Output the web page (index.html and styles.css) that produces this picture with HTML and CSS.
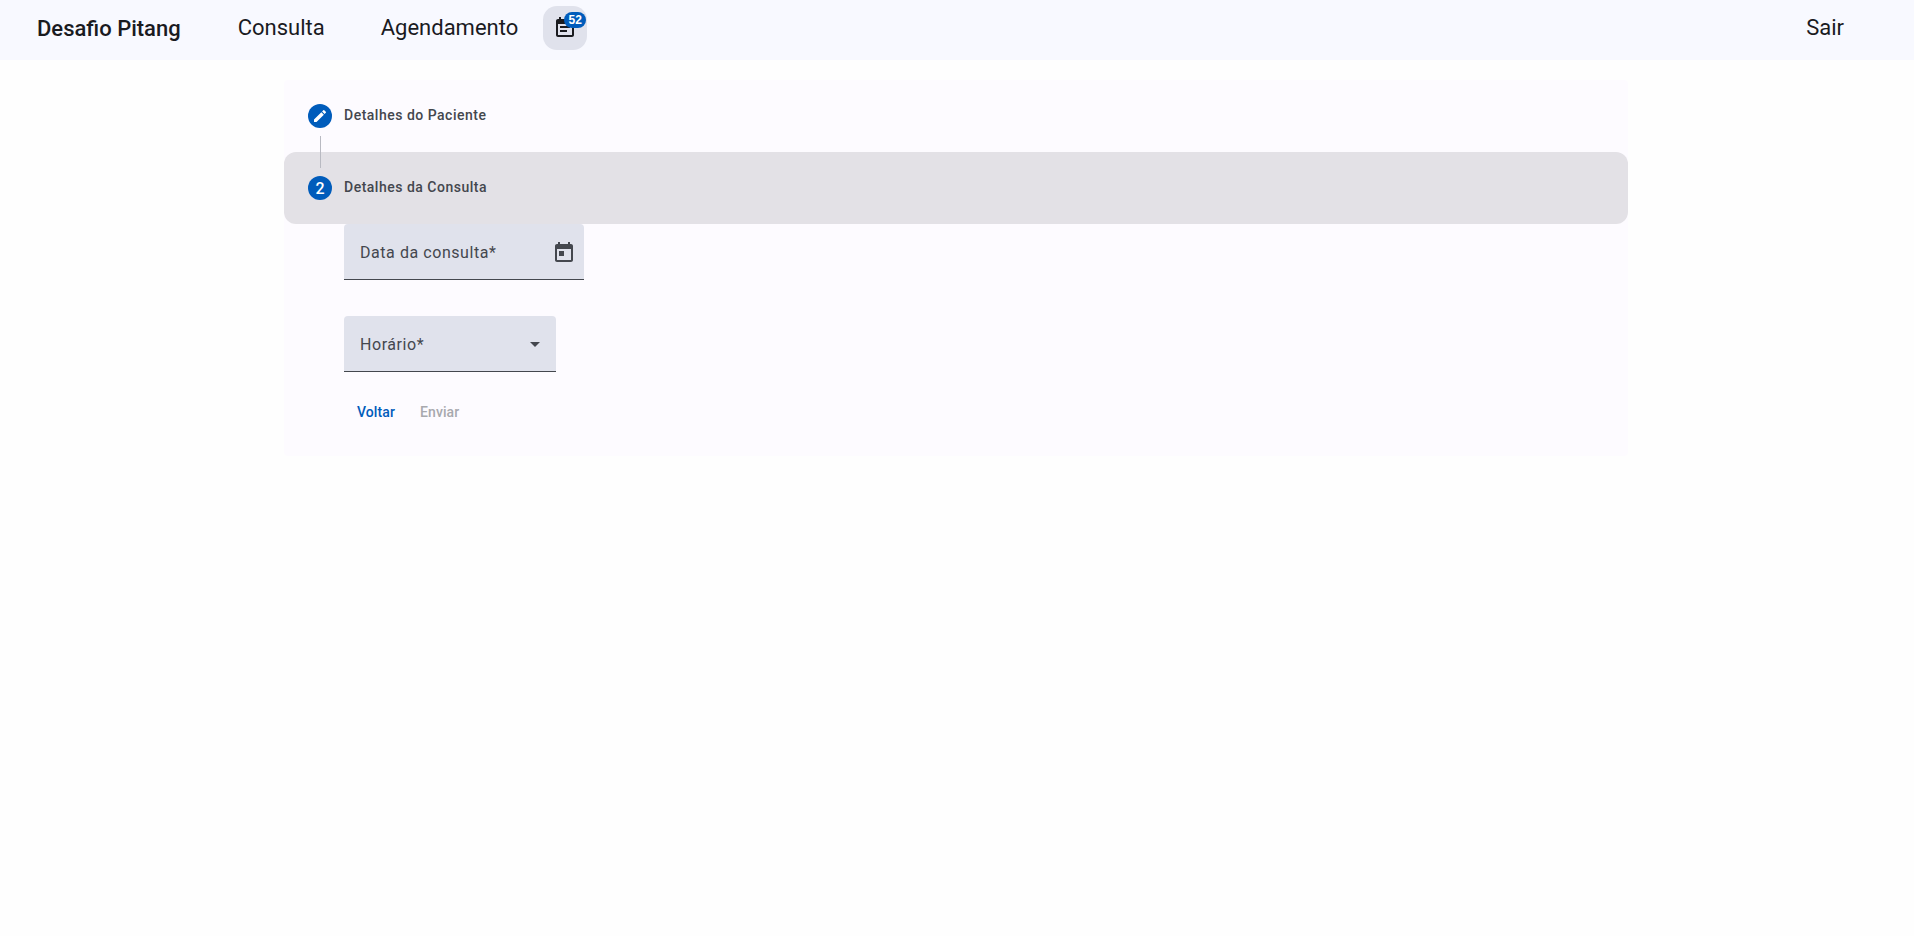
FILE: index.html
```html
<!DOCTYPE html>
<html lang="pt-BR">

<head>
  <meta charset="UTF-8">
  <title>Desafio Pitang</title>
  <link rel="stylesheet" href="styles.css">
</head>

<body>
  <header class="toolbar">
    <span class="brand">Desafio Pitang</span>
    <a class="nav-link">Consulta</a>
    <a class="nav-link">Agendamento</a>
    <button class="icon-btn" type="button">
      <svg class="icon" viewBox="0 0 24 24" width="24" height="24">
        <path d="M19 3h-1V1h-2v2H8V1H6v2H5c-1.100 0-2 .9-2 2v14c0 1.100.9 2 2 2h14c1.100 0 2-.9 2-2V5c0-1.100-.9-2-2-2zm0 16H5V8h14v11zM7 10h10v2H7v-2zm0 4h7v2H7v-2z" />
      </svg>
      <span class="badge">52</span>
    </button>
    <a class="nav-link logout">Sair</a>
  </header>

  <main class="stepper">
    <div class="step-header">
      <span class="step-icon">
        <svg viewBox="0 0 24 24" width="16" height="16">
          <path d="M3 17.250V21h3.750L17.810 9.940l-3.750-3.750L3 17.250zM20.710 7.040a1 1 0 0 0 0-1.410l-2.340-2.340a1 1 0 0 0-1.410 0l-1.830 1.830 3.750 3.750 1.830-1.830z" />
        </svg>
      </span>
      <span class="step-label">Detalhes do Paciente</span>
    </div>

    <div class="step-header step-header-active">
      <span class="step-line"></span>
      <span class="step-icon">2</span>
      <span class="step-label">Detalhes da Consulta</span>
    </div>

    <form class="step-content">
      <div class="field field-date">
        <span class="field-label">Data da consulta*</span>
        <svg class="icon icon-muted" viewBox="0 0 24 24" width="24" height="24">
          <path d="M19 4h-1V2h-2v2H8V2H6v2H5c-1.110 0-2 .9-2 2v14c0 1.100.89 2 2 2h14c1.100 0 2-.9 2-2V6c0-1.100-.9-2-2-2zm0 16H5V9h14v11zM7 11h5v5H7v-5z" />
        </svg>
      </div>

      <div class="field field-time">
        <span class="field-label">Horário*</span>
        <span class="select-arrow"></span>
      </div>

      <div class="actions">
        <button class="text-btn" type="button">Voltar</button>
        <button class="text-btn" type="button" disabled>Enviar</button>
      </div>
    </form>
  </main>
</body>

</html>
```

FILE: styles.css
```css
body {
  font-family: Roboto, sans-serif;
  background: #fefefe;
  color: #1a1b1f;
  margin: 0;
}

.toolbar {
  display: flex;
  align-items: center;
  box-sizing: border-box;
  height: 60px;
  padding: 0 16px 4px;
  background: #f8f9ff;
}

.brand {
  margin: 0 26px 0 21px;
  font-size: 22px;
  font-weight: 500;
}

.nav-link {
  padding: 0 25px 0 31px;
  font-size: 22px;
  line-height: 36px;
}

.logout {
  margin-left: auto;
  padding-right: 54px;
}

.icon-btn {
  position: relative;
  display: flex;
  align-items: center;
  justify-content: center;
  width: 44px;
  height: 44px;
  padding: 0;
  border: 0;
  border-radius: 14px;
  background: #e0e2ec;
}

.icon {
  fill: #1a1b1f;
}

.icon-muted {
  fill: #44474e;
}

.badge {
  position: absolute;
  top: 6px;
  left: 21px;
  min-width: 22px;
  height: 16px;
  border-radius: 8px;
  background: #005cbb;
  color: #fff;
  font-size: 12px;
  font-weight: 600;
  line-height: 16px;
  text-align: center;
}

.stepper {
  width: 1344px;
  margin: 20px 0 0 284px;
  padding-bottom: 24px;
  background: #fdfbff;
  border-radius: 4px;
}

.step-header {
  position: relative;
  display: flex;
  align-items: center;
  height: 72px;
  padding: 0 24px;
  border-radius: 12px;
}

.step-header-active {
  background: #e3e1e6;
}

.step-icon {
  display: flex;
  align-items: center;
  justify-content: center;
  width: 24px;
  height: 24px;
  margin-right: 12px;
  border-radius: 50%;
  background: #005cbb;
  color: #fff;
  font-size: 16px;
  font-weight: 500;
  fill: #fff;
}

.step-label {
  margin-top: -2px;
  color: #44474e;
  font-size: 14px;
  font-weight: 500;
  letter-spacing: 0.5px;
}

.step-line {
  position: absolute;
  top: -16px;
  left: 36px;
  width: 1px;
  height: 32px;
  background: #b9bac2;
}

.step-content {
  padding-left: 60px;
}

.field {
  display: flex;
  align-items: center;
  justify-content: space-between;
  box-sizing: border-box;
  height: 56px;
  padding: 0 8px 0 16px;
  background: #e0e2ec;
  border-bottom: 1px solid #44474e;
  border-radius: 4px 4px 0 0;
}

.field-date {
  width: 240px;
}

.field-time {
  width: 212px;
  margin-top: 36px;
  padding-right: 16px;
}

.field-label {
  margin-top: 2px;
  color: #44474e;
  font-size: 16px;
  letter-spacing: 0.56px;
}

.select-arrow {
  width: 0;
  height: 0;
  margin-top: 2px;
  border-left: 5px solid transparent;
  border-right: 5px solid transparent;
  border-top: 5px solid #44474e;
}

.actions {
  display: flex;
  gap: 1px;
  margin: 20px 0 0 1px;
}

.text-btn {
  height: 40px;
  padding: 0 12px;
  border: 0;
  background: none;
  color: #005cbb;
  font-family: Roboto, sans-serif;
  font-size: 14px;
  font-weight: 500;
  letter-spacing: 0.1px;
}

.text-btn:disabled {
  color: #a8a9ae;
}
```
